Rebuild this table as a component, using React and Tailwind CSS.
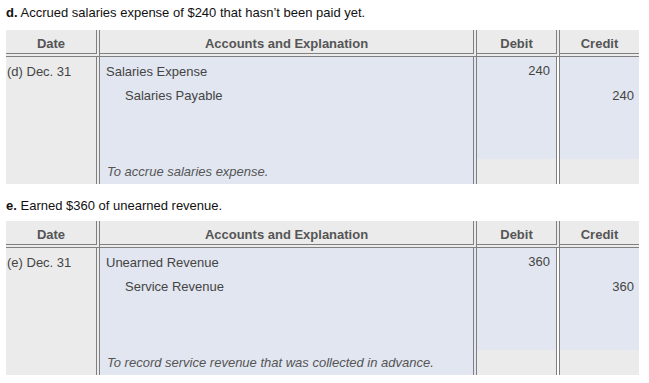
import React from 'react'

const entries = [
  {
    letter: 'd',
    title: 'Accrued salaries expense of $240 that hasn\u2019t been paid yet.',
    date: '(d) Dec. 31',
    debitAccount: 'Salaries Expense',
    creditAccount: 'Salaries Payable',
    amount: '240',
    note: 'To accrue salaries expense.',
    headingClass: 'pt-[4px] pb-[8px]',
  },
  {
    letter: 'e',
    title: 'Earned $360 of unearned revenue.',
    date: '(e) Dec. 31',
    debitAccount: 'Unearned Revenue',
    creditAccount: 'Service Revenue',
    amount: '360',
    note: 'To record service revenue that was collected in advance.',
    headingClass: 'pt-[13px] pb-[6px]',
  },
]

const sep = 'border-r-4 border-double border-[#808080]'
const headCell = 'h-[27px] pt-[4px] flex items-center justify-center border-b-4 border-double border-[#808080] bg-[#ebebeb] font-bold text-[#555]'

const JournalEntry = ({ entry }) => (
  <section>
    <p className={`h-[18px] leading-[18px] text-[13px] text-[#111] ${entry.headingClass}`} style={{ boxSizing: 'content-box' }}>
      <span className="font-bold">{entry.letter}.</span> {entry.title}
    </p>

    <div className="w-[633px] text-[13px]">
      <div className="flex">
        <div className={`w-[94px] ${headCell} ${sep}`}>Date</div>
        <div className={`w-[377px] ${headCell} ${sep}`}>Accounts and Explanation</div>
        <div className={`w-[83px] ${headCell} ${sep}`}>Debit</div>
        <div className={`w-[79px] ${headCell}`}>Credit</div>
      </div>

      <div className="flex h-[127px] text-[#444]">
        <div className={`w-[94px] bg-[#ebebeb] pl-[1px] pt-[7px] leading-[16px] ${sep}`}>{entry.date}</div>

        <div className={`w-[377px] bg-[#e1e6f0] flex flex-col ${sep}`}>
          <div className="h-[25px] pl-[6px] pt-[7px] leading-[16px]">{entry.debitAccount}</div>
          <div className="h-[25px] pl-[25px] pt-[6px] leading-[16px]">{entry.creditAccount}</div>
          <div className="h-[52px]" />
          <div className="h-[25px] pl-[7px] pt-[5px] leading-[16px] italic text-[#555]">{entry.note}</div>
        </div>

        <div className={`w-[83px] flex flex-col ${sep}`}>
          <div className="h-[102px] bg-[#e1e6f0] pr-[6px] pt-[6px] leading-[16px] text-right">{entry.amount}</div>
          <div className="h-[25px] bg-[#ebebeb]" />
        </div>

        <div className="w-[79px] flex flex-col">
          <div className="h-[102px] bg-[#e1e6f0] pr-[5px] pt-[31px] leading-[16px] text-right">{entry.amount}</div>
          <div className="h-[25px] bg-[#ebebeb]" />
        </div>
      </div>
    </div>
  </section>
)

export default function App() {
  return (
    <div className="w-[649px] h-[383px] bg-white pl-[6px] font-['Liberation_Sans',Arial,sans-serif] overflow-hidden">
      {entries.map((entry) => (
        <JournalEntry key={entry.letter} entry={entry} />
      ))}
    </div>
  )
}
